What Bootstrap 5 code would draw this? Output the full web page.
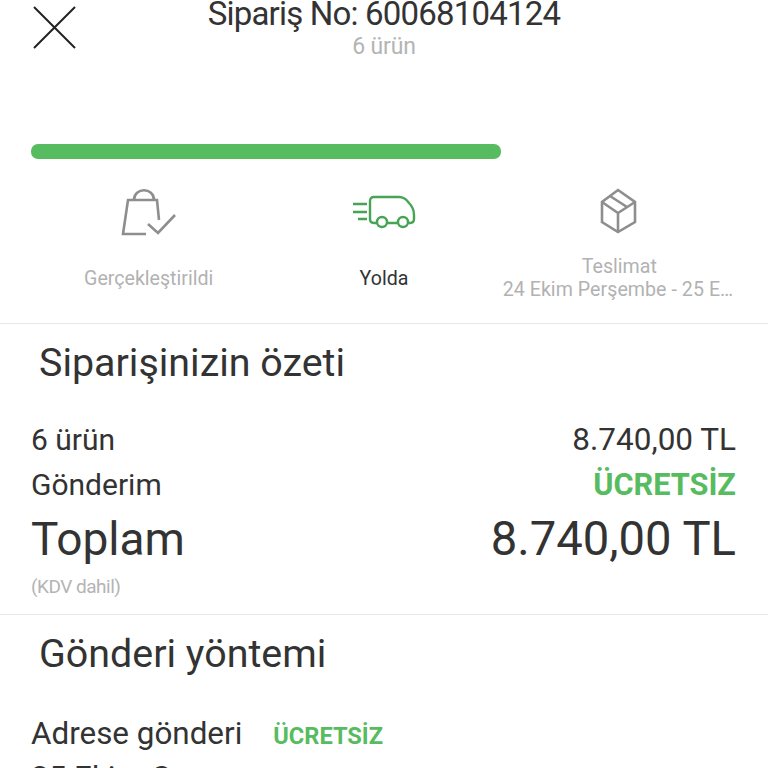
<!DOCTYPE html>
<html lang="tr">

<head>
  <meta charset="UTF-8" />
  <meta name="viewport" content="width=device-width, initial-scale=1.0" />
  <title>Sipariş No: 60068104124</title>
  <link href="https://cdn.jsdelivr.net/npm/bootstrap@5.3.0/dist/css/bootstrap.min.css" rel="stylesheet" />
  <style>
    html, body {
      height: 768px;
      overflow: hidden;
    }

    body {
      background: #fff;
      color: #333;
      font-family: Roboto, "Liberation Sans", sans-serif;
    }

    .order-head {
      height: 144px;
      padding: 0 32px;
    }

    .close-icon {
      width: 44px;
      height: 44px;
      margin-top: 5px;
      flex: none;
    }

    .order-title {
      font-size: 33px;
      line-height: 36px;
      margin-top: -4px;
      letter-spacing: -0.8px;
    }

    .order-sub {
      font-size: 23px;
      line-height: 28px;
      margin-top: 1px;
      color: #b4b4b4;
      letter-spacing: -0.2px;
    }

    .head-text {
      width: 704px;
      margin-left: -44px;
    }

    .track-bar {
      height: 15px;
      width: 470px;
      margin-left: 31px;
      background: #57bb5f;
      border-radius: 7px;
    }

    .steps {
      height: 165px;
      padding: 0 31px;
      border-bottom: 1px solid #e8e8e8;
    }

    .step-item {
      flex: 1 1 0;
      min-width: 0;
      text-align: center;
      font-size: 19.6px;
      line-height: 23px;
      color: #b2b2b2;
    }

    .step-icon {
      height: 60px;
      margin-top: 25px;
      margin-bottom: 23px;
    }

    .step-now {
      color: #333;
    }

    .step-last {
      margin-bottom: 11px;
    }

    .step-date {
      padding-left: 1px;
      letter-spacing: 0.05px;
    }

    .sec-title {
      font-size: 39.4px;
      line-height: 44px;
      padding-left: 39px;
      margin: 0;
      font-weight: 400;
    }

    .summary {
      height: 291px;
      border-bottom: 1px solid #e8e8e8;
      padding-top: 17px;
    }

    .sum-rows {
      padding: 32px 32px 0 31px;
    }

    .sum-line {
      font-size: 30px;
      line-height: 45px;
    }

    .sum-amount {
      font-size: 31.5px;
    }

    .sum-free {
      font-size: 30.7px;
    }

    .total-line {
      font-size: 46px;
      line-height: 64px;
    }

    .total-amount {
      font-size: 47.2px;
    }

    .free-text {
      color: #57bb5f;
      font-weight: 700;
    }

    .tax-note {
      font-size: 19px;
      line-height: 26px;
      margin-top: 3px;
      color: #b4b4b4;
      letter-spacing: -0.5px;
    }

    .shipping {
      padding-top: 17px;
    }

    .ship-rows {
      padding: 37px 31px 0;
      font-size: 31.4px;
      line-height: 42px;
    }

    .ship-free {
      font-size: 23.6px;
      margin-left: 31px;
    }
  </style>
</head>

<body>

  <div class="order-head d-flex">
    <svg class="close-icon" viewBox="0 0 44 44" fill="none" stroke="#222" stroke-width="2">
      <path d="M2 2 L43 43 M43 2 L2 43" />
    </svg>
    <div class="head-text text-center">
      <div class="order-title">Sipariş No: 60068104124</div>
      <div class="order-sub">6 ürün</div>
    </div>
  </div>

  <div class="track-bar"></div>

  <div class="steps d-flex">
    <div class="step-item">
      <div class="step-icon d-flex justify-content-center">
        <svg width="60" height="60" viewBox="0 0 60 60" fill="none" stroke="#8e8e8e" stroke-width="2.6">
          <path d="M27 50 H4 L9 16 H38 L40 36" />
          <path d="M15 16 C15 3 35 3 35 16" />
          <path d="M29 40 L39 49 L56 31" />
        </svg>
      </div>
      <div>Gerçekleştirildi</div>
    </div>
    <div class="step-item step-now">
      <div class="step-icon d-flex justify-content-center">
        <svg width="66" height="60" viewBox="0 0 66 60" fill="none" stroke="#48a455" stroke-width="2.4">
          <path d="M2 20 H16 M2 28 H16 M7 35 H16" />
          <path d="M26 39 H23 Q19 39 19 35 V17 Q19 13 23 13 H48 Q54 13 58 19 Q63 24 63 31 V35 Q63 39 59 39 H57 M36 39 H47" />
          <circle cx="31" cy="38" r="5" />
          <circle cx="52" cy="38" r="5" />
        </svg>
      </div>
      <div>Yolda</div>
    </div>
    <div class="step-item">
      <div class="step-icon step-last d-flex justify-content-center">
        <svg width="40" height="60" viewBox="0 0 40 60" fill="none" stroke="#8e8e8e" stroke-width="2.6">
          <path d="M19 6 L36 18 V38 L19 48 L3 38 V18 Z" />
          <path d="M3 18 L19 29 L36 18 M19 29 V48 M11 12 L28 23" />
        </svg>
      </div>
      <div>Teslimat</div>
      <div class="step-date text-truncate">24 Ekim Perşembe - 25 Ekim Cuma</div>
    </div>
  </div>

  <div class="summary">
    <h2 class="sec-title">Siparişinizin özeti</h2>
    <div class="sum-rows">
      <div class="sum-line d-flex justify-content-between">
        <span>6 ürün</span><span class="sum-amount">8.740,00 TL</span>
      </div>
      <div class="sum-line d-flex justify-content-between">
        <span>Gönderim</span><span class="free-text sum-free">ÜCRETSİZ</span>
      </div>
      <div class="total-line d-flex justify-content-between">
        <span>Toplam</span><span class="total-amount">8.740,00 TL</span>
      </div>
      <div class="tax-note">(KDV dahil)</div>
    </div>
  </div>

  <div class="shipping">
    <h2 class="sec-title">Gönderi yöntemi</h2>
    <div class="ship-rows">
      <div class="d-flex align-items-baseline">
        <span>Adrese gönderi</span><span class="free-text ship-free">ÜCRETSİZ</span>
      </div>
      <div>25 Ekim Cuma</div>
    </div>
  </div>

  <script src="https://cdn.jsdelivr.net/npm/bootstrap@5.3.0/dist/js/bootstrap.bundle.min.js"></script>
</body>
</html>
